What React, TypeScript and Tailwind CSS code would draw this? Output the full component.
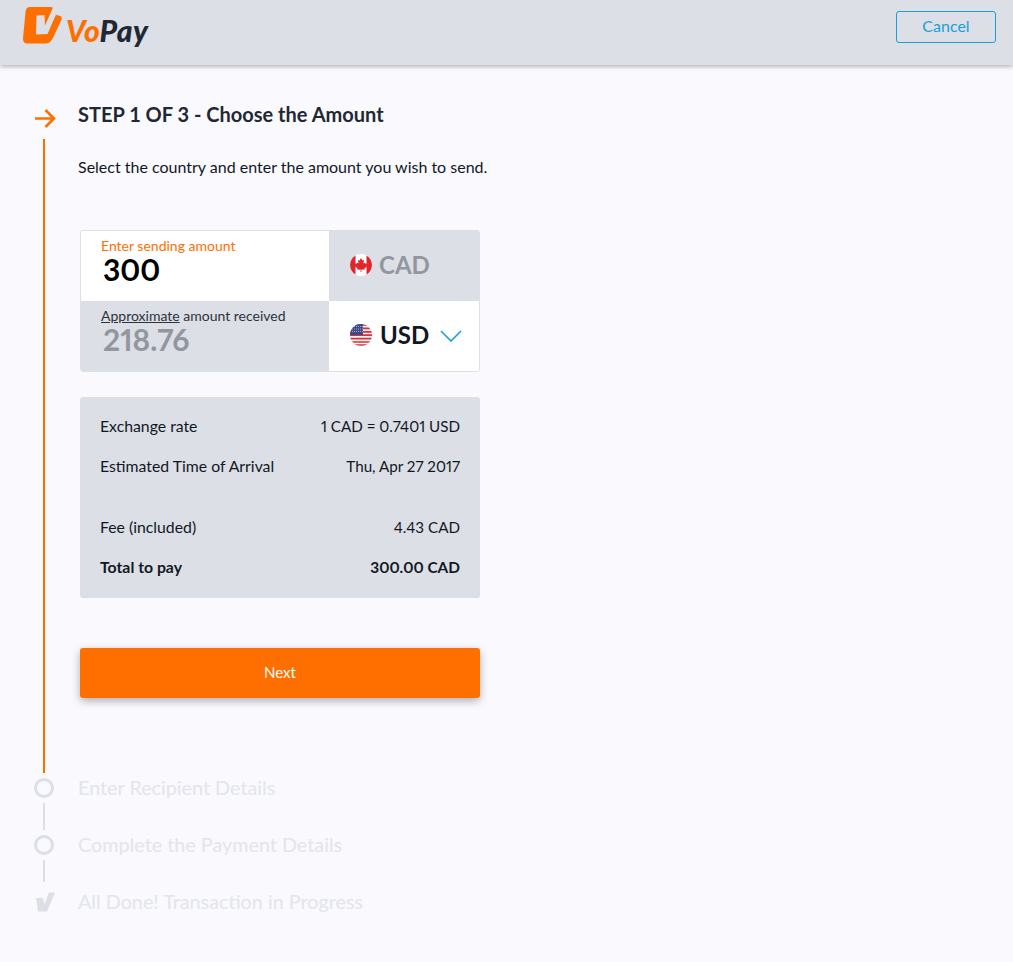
const FONT = "font-['Lato','Open_Sans',sans-serif]";

function Logo() {
  return (
    <div className="flex items-start">
      <svg width="42" height="40" viewBox="0 0 42 40" className="shrink-0">
        <path
          d="M8 1 H29 Q31.5 1 31 3.5 L31 8.5 Q32 8 33.5 8.5 L38 10 Q40.5 11 39.5 13.5 L31 32 Q28.5 37.5 23 37.5 H6 Q0.5 37.5 1 32 L3.5 6 Q4 1 8 1 Z"
          fill="#ff6f00"
        />
        <path d="M14.5 9.5 L22.5 9 L23 19.5 L31 1.5 L34 8.5 L25.5 28 L14 28.5 Z" fill="#dcdfe6" />
      </svg>
      <span className="ml-[2px] mt-[9px] text-[30px] leading-none font-black italic tracking-[0.4px]">
        <span className="text-[#ff6f00]">Vo</span>
        <span className="text-[#1f2833]">Pay</span>
      </span>
    </div>
  );
}

function CanadaFlag() {
  return (
    <svg width="22" height="22" viewBox="0 0 22 22" className="shrink-0">
      <circle cx="11" cy="11" r="11" fill="#ffffff" />
      <path d="M5.5 1.5 A11 11 0 0 0 5.5 20.5 Z" fill="#e0262c" />
      <path d="M16.5 1.5 A11 11 0 0 1 16.5 20.5 Z" fill="#e0262c" />
      <path
        d="M11 4 L12.4 6.6 L14 5.8 L13.4 9.4 L15 8.4 L15.5 9.8 L17.3 9.5 L16.7 11.6 L17.5 12.1 L14.4 14.6 L14.8 15.8 L11.4 15.4 L11.4 18 L10.6 18 L10.6 15.4 L7.2 15.8 L7.6 14.6 L4.5 12.1 L5.3 11.6 L4.7 9.5 L6.5 9.8 L7 8.4 L8.6 9.4 L8 5.8 L9.6 6.6 Z"
        fill="#e0262c"
      />
    </svg>
  );
}

function UsaFlag() {
  return (
    <svg width="22" height="22" viewBox="0 0 22 22" className="shrink-0">
      <defs>
        <clipPath id="usa-circle">
          <circle cx="11" cy="11" r="11" />
        </clipPath>
      </defs>
      <g clipPath="url(#usa-circle)">
        <rect width="22" height="22" fill="#f4f1f3" />
        <path
          d="M0 1 H22 M0 4.4 H22 M0 7.8 H22 M0 11.2 H22 M0 14.6 H22 M0 18 H22 M0 21 H22"
          stroke="#d9303a"
          strokeWidth="1.7"
        />
        <rect width="13" height="11" fill="#3c4a86" />
        <path d="M0 2.5 H13 M0 5 H13 M0 7.5 H13" stroke="#c3c8e0" strokeWidth="0.8" strokeDasharray="1 1" />
      </g>
    </svg>
  );
}

function InfoRow({ label, value, bold, className }: { label: string; value: string; bold?: boolean; className?: string }) {
  return (
    <div
      className={`flex h-5 items-baseline justify-between text-[#12181f] ${bold ? "font-bold" : ""} ${className ?? ""}`}
    >
      <span className="text-[15.8px] leading-5">{label}</span>
      <span className={`proportional-nums leading-5 ${bold ? "text-[15.4px]" : "text-[15.2px]"}`}>{value}</span>
    </div>
  );
}

function PendingStep({ label, icon }: { label: string; icon: "circle" | "check" }) {
  return (
    <div className="flex h-5 items-center">
      <div className="flex w-5 justify-center">
        {icon === "circle" ? (
          <div className="h-5 w-5 rounded-full border-[3px] border-[#dcdfe6]" />
        ) : (
          <svg width="20" height="20" viewBox="0 0 20 20" className="ml-[2px] shrink-0">
            <path d="M1 6 L8 6 L9.5 12 L14 0.5 L20 0.5 L12 19.5 L3 19.5 Z" fill="#dcdfe6" />
          </svg>
        )}
      </div>
      <span className="ml-6 text-[19.8px] text-[#e3e5eb]">{label}</span>
    </div>
  );
}

export default function App() {
  return (
    <div className={`${FONT} min-h-[962px] bg-[#f9f9fe]`}>
      <header className="flex h-[65px] items-start justify-between bg-[#dcdfe6] pl-[22px] pr-[17px] pt-[6px] shadow-[0_2px_4px_rgba(0,0,0,0.25)]">
        <Logo />
        <button
          type="button"
          className="mt-[5px] h-8 w-[100px] rounded-[3px] border border-[#1a9fd8] pb-[2px] text-[16px] text-[#1a9fd8]"
        >
          Cancel
        </button>
      </header>

      <main className="pl-[34px] pt-[38px]">
        <div className="flex">
          <div className="flex w-5 flex-col items-center pt-[5px]">
            <svg width="24" height="20" viewBox="0 0 24 20" className="shrink-0">
              <path d="M3 10.5 H22 M13.5 2 L22 10.5 L13.5 19" fill="none" stroke="#ff6f00" strokeWidth="2.6" />
            </svg>
            <div className="mt-[11px] w-[2px] flex-1 bg-[#ff6f00]" />
          </div>
          <div className="ml-6 h-[670px]">
            <h1 className="text-[20px] font-bold leading-[22px] text-[#1f2833]">STEP 1 OF 3 - Choose the Amount</h1>
            <p className="mt-[32px] text-[16px] leading-5 text-[#12181f]">
              Select the country and enter the amount you wish to send.
            </p>

            <div className="ml-[2px] mt-[53px] w-[400px]">
              <div className="overflow-hidden rounded-[3px] border border-[#dcdfe6]">
                <div className="flex h-[70px]">
                  <div className="w-[248px] bg-white pl-5 pt-[7px]">
                    <div className="text-[14px] leading-4 text-[#ff6f00]">Enter sending amount</div>
                    <div className="ml-[2px] text-[30px] font-bold leading-[31px] text-black proportional-nums">300</div>
                  </div>
                  <div className="flex flex-1 items-center bg-[#dcdfe6] pb-[2px] pl-[21px]">
                    <CanadaFlag />
                    <span className="ml-[7px] text-[24px] font-bold text-[#92969e]">CAD</span>
                  </div>
                </div>
                <div className="flex h-[70px]">
                  <div className="w-[248px] bg-[#dcdfe6] pl-5 pt-[7px]">
                    <div className="text-[14px] leading-4 text-[#2d333b]">
                      <span className="underline">Approximate</span> amount received
                    </div>
                    <div className="ml-[2px] text-[30px] font-bold leading-[31px] text-[#92969e] proportional-nums">
                      218.76
                    </div>
                  </div>
                  <div className="flex flex-1 items-center bg-white pb-[2px] pl-[21px]">
                    <UsaFlag />
                    <span className="ml-[8px] text-[24px] font-bold text-[#12181f]">USD</span>
                    <svg width="22" height="12" viewBox="0 0 22 12" className="ml-[11px] mt-[2px]">
                      <path d="M1 1 L11 11 L21 1" fill="none" stroke="#1a9fd8" strokeWidth="1.6" />
                    </svg>
                  </div>
                </div>
              </div>

              <div className="mt-[25px] h-[201px] rounded-[3px] bg-[#dcdfe6] px-5 pt-[19px]">
                <InfoRow label="Exchange rate" value="1 CAD = 0.7401 USD" />
                <InfoRow label="Estimated Time of Arrival" value="Thu, Apr 27 2017" className="mt-5" />
                <InfoRow label="Fee (included)" value="4.43 CAD" className="mt-[41px]" />
                <InfoRow label="Total to pay" value="300.00 CAD" bold className="mt-5" />
              </div>

              <button
                type="button"
                className="mt-[50px] h-[50px] w-full rounded-[3px] bg-[#ff6f00] pb-[2px] text-[15px] text-white shadow-[0_3px_8px_rgba(0,0,0,0.3)]"
              >
                Next
              </button>
            </div>
          </div>
        </div>

        <div className="mt-[5px]">
          <PendingStep label="Enter Recipient Details" icon="circle" />
          <div className="ml-[9px] my-[5px] h-[27px] w-[2px] bg-[#dcdfe6]" />
          <PendingStep label="Complete the Payment Details" icon="circle" />
          <div className="ml-[9px] mt-[5px] mb-[10px] h-[22px] w-[2px] bg-[#dcdfe6]" />
          <PendingStep label="All Done! Transaction in Progress" icon="check" />
        </div>
      </main>
    </div>
  );
}
